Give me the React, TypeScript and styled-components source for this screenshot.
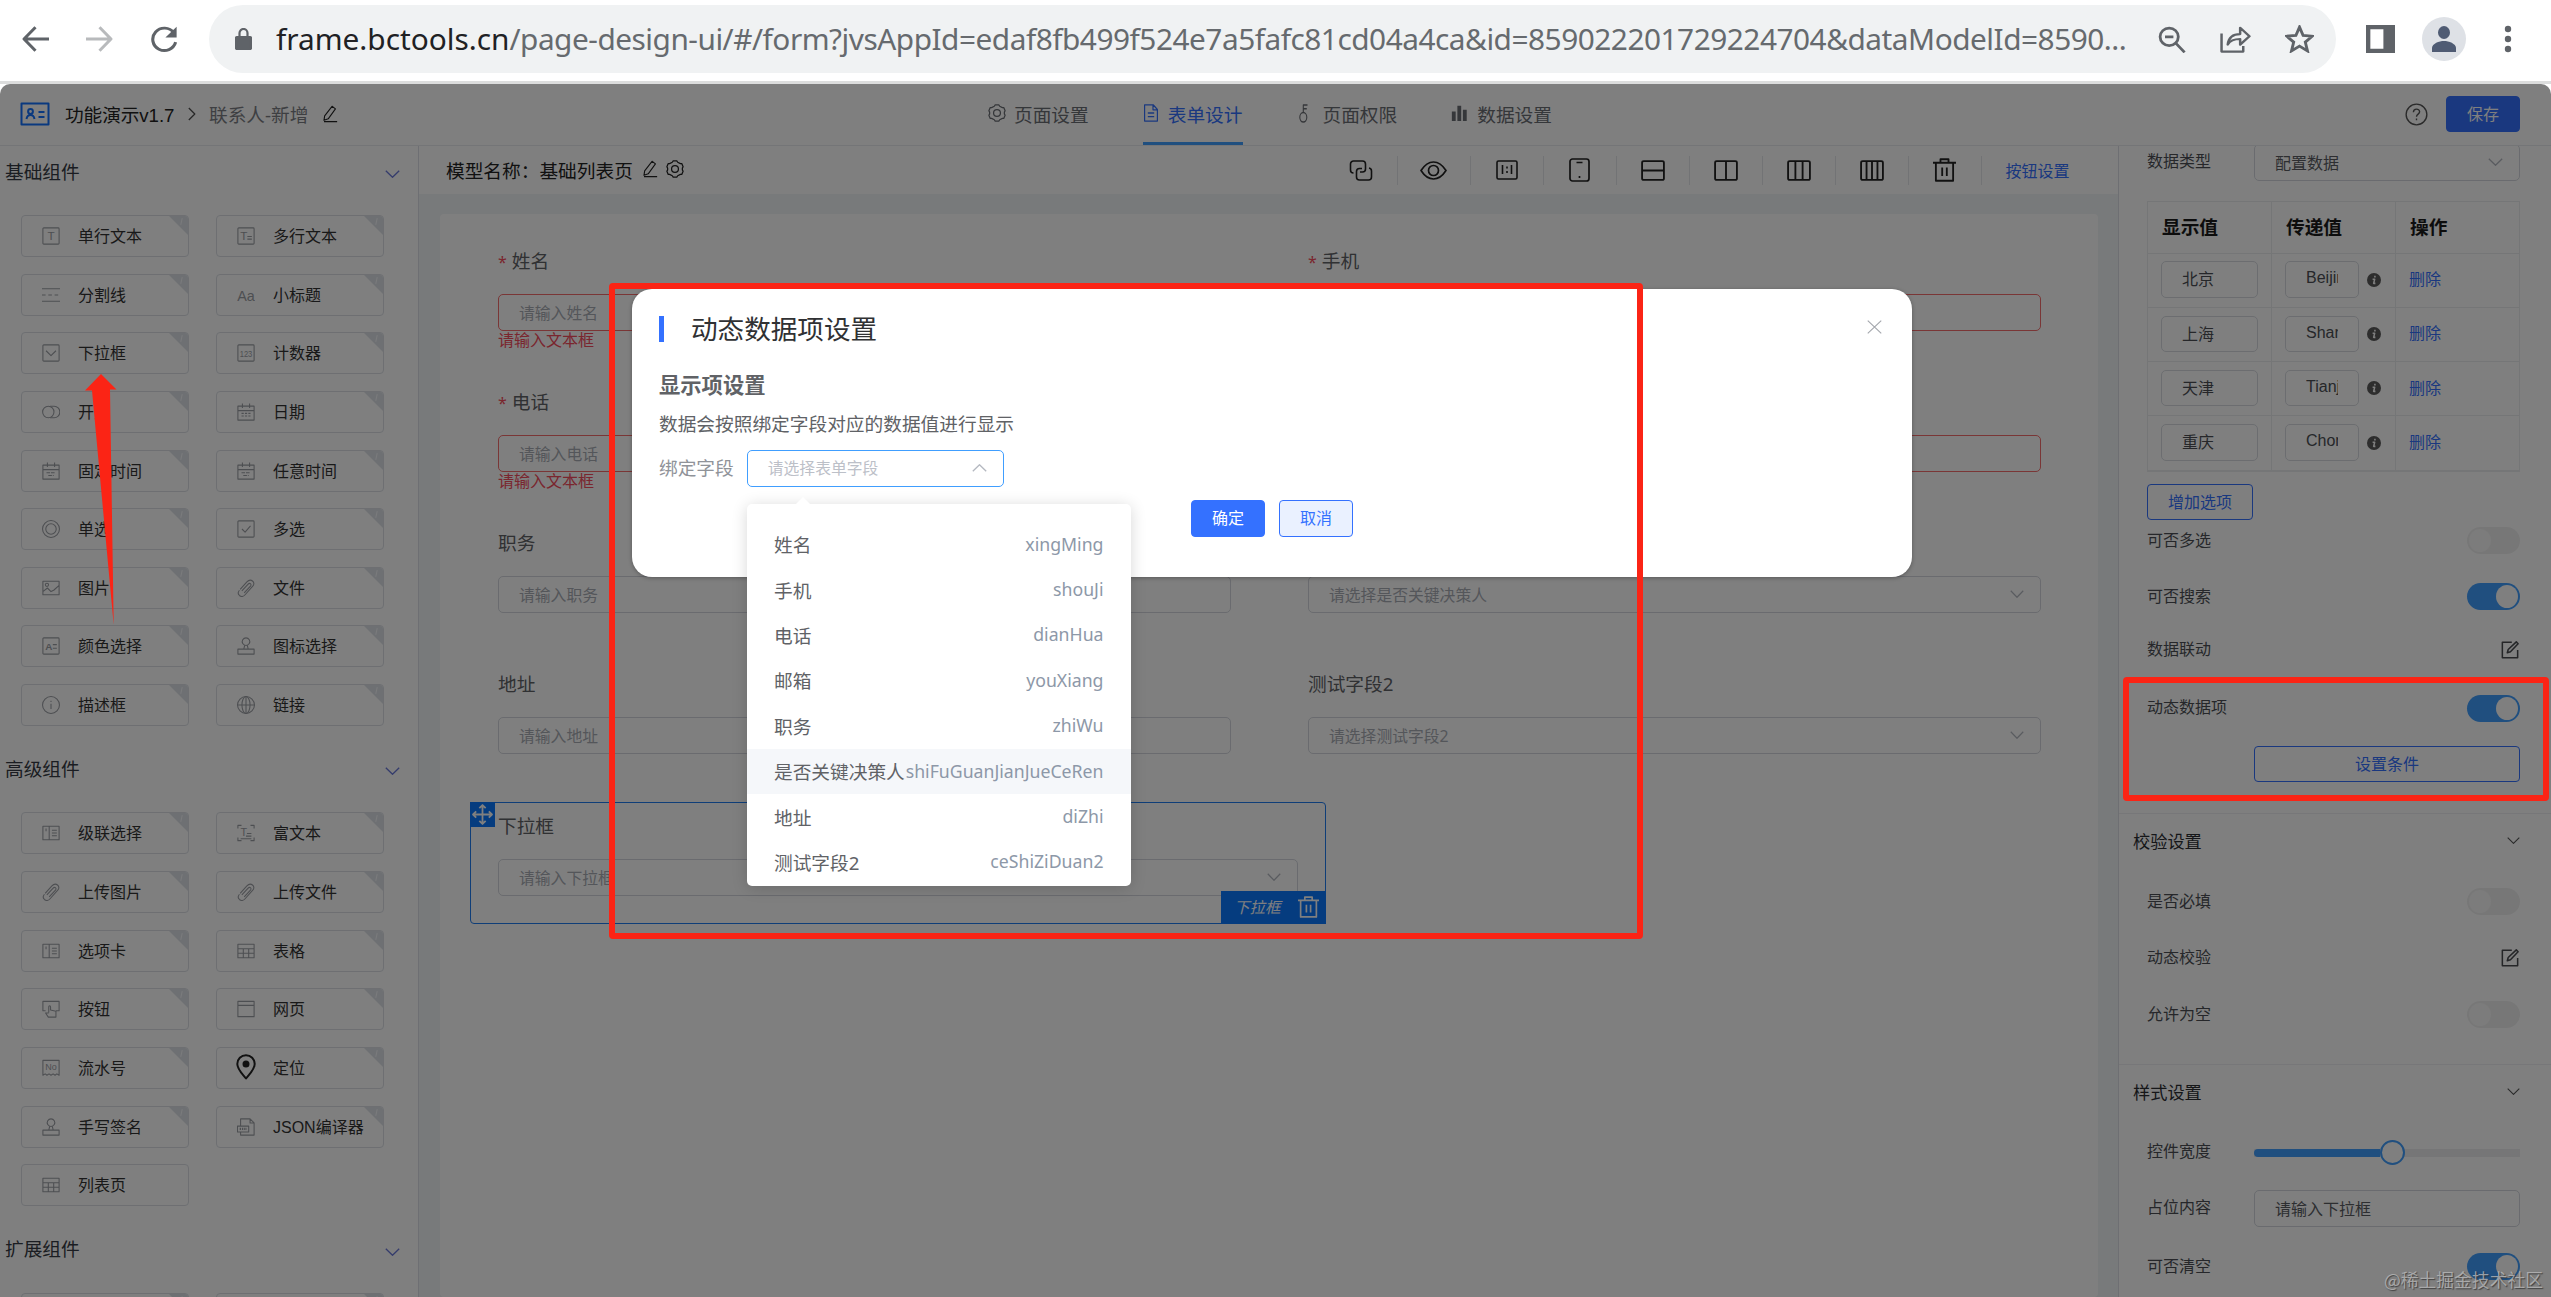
import { ReactNode } from "react";
import styled, { createGlobalStyle, css } from "styled-components";

const cjk = `"Noto Sans CJK SC", sans-serif`;
const ui = `"Noto Sans", ${cjk}`;
const arial = `"Liberation Sans", ${cjk}`;

const GlobalStyle = createGlobalStyle`
    * { box-sizing: border-box; }
    html, body, #root { margin: 0; height: 100%; overflow: hidden; }
    body { background: #fff; font-family: ${ui}; font-size: 18.7px; color: #333; }
    svg { display: block; flex-shrink: 0; }
`;

const Page = styled.div`
    height: 100vh;
    display: flex;
    flex-direction: column;
    position: relative;
`;

// ── Icons ──────────────────────────────────────────────────────────────────────────────
const Svg: React.FC<{ w?: number; h?: number; box?: string; sw?: number; fill?: string; color?: string; children: ReactNode }> = ({
    w = 20, h = w, box = "0 0 20 20", sw = 1.1, fill = "none", color = "currentColor", children,
}) => (
    <svg width={w} height={h} viewBox={box} fill={fill} stroke={color} strokeWidth={sw} strokeLinejoin="round" preserveAspectRatio="none">
        {children}
    </svg>
);

const glyph = { stroke: "none", fill: "currentColor", fontFamily: "Liberation Sans", textAnchor: "middle" as const };
const square = <rect x="1" y="1" width="18" height="18" rx="1" />;
const calendar = <path d="M1 3.5h18V19H1zM1 8.5h18M6 .5v5M14 .5v5" />;
const clip = <path d="M3.500 11.500l7.500-8.200c2-2.200 4.800-2.200 6.500-.8 1.700 1.400 1.500 3.900 0 5.500l-8.500 9.500c-1.700 1.900-4.500 2.200-6.300.8-1.700-1.500-1.500-4 0-5.800M8 15.500l7-7.700c.8-1 .7-2-.1-2.600-.8-.6-1.700-.5-2.500.4l-7 7.700" />;
const panel = <path d="M1 2.500h18v15H1zM8 2.500v15M4.500 5v3M11 7h5.500M11 10h5.500M11 13h5.500" />;
const grid = <path d="M1 2.500h18v15H1zM1 7.500h18M1 12.500h18M7 7.500v10M13 7.500v10" />;
const stamp = <path d="M1 13.500h18v5.500H1zM7.500 13.500l1-4M12.500 13.500l-1-4M10 1a4.200 4.200 0 1 0 .01 0z" />;

const icons: Record<string, ReactNode> = {
    text: <>{square}<text x="10" y="14.500" fontSize="13" {...glyph}>T</text></>,
    textarea: <>{square}<text x="7.500" y="14.500" fontSize="13" {...glyph}>T</text><path d="M11.500 10.500h5M11.500 13.500h5" /></>,
    divider: <><path d="M0 3h20M0 17h20" /><path d="M0 10h20" strokeDasharray="4 3" /></>,
    title: <text x="10" y="17" fontSize="16" {...glyph}>Aa</text>,
    select: <>{square}<path d="M4.500 7.500l5.500 5.500 5.500-5.500" /></>,
    counter: <>{square}<text x="10" y="14" fontSize="10" textLength="14" lengthAdjust="spacingAndGlyphs" {...glyph}>123</text></>,
    toggle: <><circle cx="7" cy="10" r="6.300" /><path d="M9 3.700h4.500a6.300 6.300 0 0 1 0 12.600H9" /></>,
    date: <>{calendar}<path d="M5 11.500h10M5 14.500h10" strokeDasharray="2.500 1.300" /></>,
    time: <>{calendar}<path d="M5 12h10M7 15h6" strokeDasharray="4 1" /></>,
    radio: <><circle cx="10" cy="10" r="9.400" /><circle cx="10" cy="10" r="5.800" /></>,
    check: <>{square}<path d="M5.500 10l3.500 3.500 6-7" /></>,
    image: <><path d="M1 2.500h18v15H1zM1 14l5-4 4 4 3-1.500 6-5.500" /><circle cx="5.500" cy="6.500" r="1.800" /></>,
    clip,
    color: <>{square}<text x="7.500" y="14" fontSize="11" fontWeight="bold" {...glyph}>A</text><path d="M12 8.500h4.500M12 12.500h4.500" /></>,
    stamp,
    info: <><circle cx="10" cy="10" r="9.400" /><path d="M10 8.500v6M10 5.300v1.500" /></>,
    globe: <><circle cx="10" cy="10" r="9.400" /><ellipse cx="10" cy="10" rx="4.500" ry="9.400" /><path d="M.6 10h18.800M10 .6v18.800" /></>,
    panel,
    rich: <><path d="M1 5V1.500h4M15 1.500h4V5M19 15v3.500h-4M5 18.500H1V15M11 10.500h5M10 13.500h6M4 16.300h12" /><text x="7.500" y="13.500" fontSize="12" {...glyph}>T</text></>,
    grid,
    press: <path d="M4 12H1V1.500h18V12h-3.500M7.500 14V7.500c0-1.500 2-1.500 2 0V11l6 1.500v6.500H7L4 14.500h3.500" />,
    web: <path d="M1 1.500h18v17H1zM1 6h18" />,
    number: <><path d="M1 1.500h18v16.500l-2.500-1.500-2 1.500-2.200-1.500-2.300 1.500-2.200-1.500-2.300 1.500-2-1.500L1 18z" /><text x="10" y="12.500" fontSize="10" {...glyph}>No</text></>,
    json: <><path d="M4 9V1h10.500l4.500 4.500V19H4v-3M14.500 1v4.500H19M.5 9H13v6.500H.5z" /><path d="M3 12.200h8" strokeDasharray="1.500 1" strokeWidth="2.500" /></>,
};

const Chevron: React.FC<{ w?: number; h?: number; color?: string; up?: boolean }> = ({ w = 15, h = 8, color = "#b4b8c0", up }) => (
    <Svg w={w} h={h} box="0 0 15 8" color={color} sw={1.3}>
        <path d={up ? "M.8 7.300L7.500.8l6.700 6.500" : "M.8.8l6.700 6.500L14.200.8"} />
    </Svg>
);

const Pencil = () => (
    <Svg w={17} h={18} sw={1.3}><path d="M3.500 17l.8-5L13 1.500l4 2.800-8.500 11zM3.500 18.500H19" /></Svg>
);
const Gear = () => (
    <Svg w={18} h={18} sw={1.4}>
        <path d="M7 2.500L8 1h4l1 1.500 3 1.500h1.500l1.500 3.500-.8 1.500v2l.8 1.500-1.500 3.500H16l-3 1.500-1 1.500H8l-1-1.500-3-1.500H2.500L1 12.500l.8-1.500V9L1 7.500 2.500 4H4z" />
        <circle cx="10" cy="10" r="3.800" />
    </Svg>
);
const Trash: React.FC<{ w: number; h: number; sw?: number }> = ({ w, h, sw = 1.6 }) => (
    <Svg w={w} h={h} sw={sw}><path d="M0 4h20M6.500 4V1h7v3M2.500 4v15h15V4M8 8v7M12 8v7" /></Svg>
);
const Edit = styled((p: { className?: string }) => (
    <span {...p}>
        <Svg w={18} h={18} sw={1.7} color="#4a4c50"><path d="M12 1.500H1.500v17h17V10M7 13l1-3.500L17 1l2 2-8.500 9z" /></Svg>
    </span>
))`
    margin-right: 1px;
`;

// ── Browser bar ────────────────────────────────────────────────────────────────────────
const BrowserBar = styled.div`
    height: 84px;
    flex-shrink: 0;
    display: flex;
    align-items: center;
    padding: 0 39px 3px 22px;
    background: #fff;
    border-bottom: 3px solid #dcdddd;
    color: #5f6368;
`;
const NavIcons = styled.div`
    display: flex;
    gap: 37px;
    width: 187px;
`;
const Address = styled.div`
    width: 2127px;
    height: 68px;
    flex-shrink: 0;
    border-radius: 34px;
    background: #f0f2f3;
    display: flex;
    align-items: center;
    padding: 0 0 0 26px;
`;
const Url = styled.div`
    margin-left: 24px;
    width: 1882px;
    font-size: 29.800px;
    line-height: 40px;
    letter-spacing: -0.480px;
    white-space: nowrap;
    color: #666a6e;
    b { font-weight: 400; color: #202124; letter-spacing: 0; }
`;
const AddressIcons = styled.div`
    display: flex;
    align-items: center;
    gap: 34px;
`;
const BarTail = styled.div`
    flex: 1;
    display: flex;
    align-items: center;
    justify-content: space-between;
    padding-left: 30px;
`;
const Avatar = styled.div`
    width: 44px;
    height: 44px;
    border-radius: 50%;
    background: #dee1e6;
    display: flex;
    align-items: center;
    justify-content: center;
    margin-right: 11px;
`;

// ── App header ─────────────────────────────────────────────────────────────────────────
const AppFrame = styled.div`
    flex: 1;
    min-height: 0;
    display: flex;
    flex-direction: column;
    position: relative;
    isolation: isolate;
    border-radius: 10px 10px 0 0;
    overflow: hidden;
`;
const Header = styled.header`
    height: 62px;
    flex-shrink: 0;
    display: grid;
    grid-template-columns: 988px 1fr auto;
    align-items: center;
    padding-right: 31px;
    border-bottom: 1px solid #e8eaee;
`;
const Crumbs = styled.div`
    display: flex;
    align-items: center;
    padding-left: 20px;
    padding-bottom: 2px;
    white-space: nowrap;
    color: #222;
`;
const CrumbName = styled.span`
    width: 110px;
    margin: 0 13px 0 15px;
    font-family: ${arial};
    letter-spacing: -0.1px;
`;
const CrumbPage = styled.span`
    color: #7c7f85;
    margin: 0 13px 0 13px;
`;
const Tabs = styled.nav`
    display: flex;
    align-self: stretch;
    gap: 54px;
`;
const Tab = styled.div<{ $active?: boolean; $gap?: number }>`
    display: flex;
    align-items: center;
    gap: ${(p) => p.$gap ?? 9}px;
    height: 61px;
    color: ${(p) => (p.$active ? "#3471ff" : "#6b6e74")};
    border-bottom: 3px solid ${(p) => (p.$active ? "#409eff" : "transparent")};
`;
const HeaderRight = styled.div`
    display: flex;
    align-items: center;
    gap: 18px;
    padding-bottom: 1px;
`;
const Button = styled.button<{ $kind?: "primary" | "plain" | "outline"; $w: number }>`
    width: ${(p) => p.$w}px;
    height: 36.500px;
    padding: 0 0 2px;
    border-radius: 4px;
    font-family: ${cjk};
    font-size: 16px;
    border: 1.500px solid #3471ff;
    ${(p) =>
        p.$kind === "primary"
            ? css`background: #3471ff; color: #fff;`
            : p.$kind === "plain"
              ? css`background: #eaf1ff; color: #3471ff;`
              : css`background: transparent; color: #3471ff;`}
`;

const Columns = styled.div`
    flex: 1;
    min-height: 0;
    display: grid;
    grid-template-columns: 419px 1700px 1fr;
`;

// ── Component palette ──────────────────────────────────────────────────────────────────
const Palette = styled.aside`
    border-right: 1px solid #dcdfe6;
    overflow: hidden;
`;
const PaletteHead = styled.div`
    height: 51px;
    display: flex;
    align-items: center;
    justify-content: space-between;
    padding: 0 18px 3px 5px;
    font-family: ${cjk};
    color: #363b44;
    svg { margin-top: 8px; }
`;
const PaletteGrid = styled.div`
    display: grid;
    grid-template-columns: 168px 168px;
    grid-auto-rows: 42px;
    gap: 16.650px 27px;
    padding: 18px 0 17.300px 21px;
`;
const Card = styled.div<{ $tag: boolean }>`
    position: relative;
    display: flex;
    align-items: center;
    gap: 18px;
    padding-left: 20px;
    padding-bottom: 2px;
    border: 1px solid #dcdfe5;
    border-radius: 4px;
    overflow: hidden;
    font-family: ${arial};
    font-size: 16px;
    white-space: nowrap;
    svg { color: #9b9ea4; margin-top: 2px; }
    ${(p) =>
        p.$tag &&
        css`
            &::before {
                content: "";
                position: absolute;
                z-index: 1;
                top: 2px;
                right: 6px;
                width: 1px;
                height: 7px;
                background: #f5f7fa;
                transform: rotate(12deg);
            }
            &::after {
                content: "";
                position: absolute;
                top: -1px;
                right: -1px;
                border-top: 21px solid #dde1e7;
                border-left: 21px solid transparent;
            }
        `}
`;

const basic: [string, string][] = [
    ["text", "单行文本"], ["textarea", "多行文本"],
    ["divider", "分割线"], ["title", "小标题"],
    ["select", "下拉框"], ["counter", "计数器"],
    ["toggle", "开关"], ["date", "日期"],
    ["time", "固定时间"], ["time", "任意时间"],
    ["radio", "单选"], ["check", "多选"],
    ["image", "图片"], ["clip", "文件"],
    ["color", "颜色选择"], ["stamp", "图标选择"],
    ["info", "描述框"], ["globe", "链接"],
];
const advanced: [string, string][] = [
    ["panel", "级联选择"], ["rich", "富文本"],
    ["clip", "上传图片"], ["clip", "上传文件"],
    ["panel", "选项卡"], ["grid", "表格"],
    ["press", "按钮"], ["web", "网页"],
    ["number", "流水号"], ["pin", "定位"],
    ["stamp", "手写签名"], ["json", "JSON编译器"],
    ["grid", "列表页"],
];
const extended: [string, string][] = [["grid", ""], ["web", ""]];

const PinWrap = styled.span`
    margin: 0 -1px;
    && svg { color: #222; margin-top: 0; }
`;

function PaletteSection({ title, items }: { title: string; items: [string, string][] }) {
    return (
        <section>
            <PaletteHead>{title}<Chevron color="#6a78d8" /></PaletteHead>
            <PaletteGrid>
                {items.map(([icon, label], i) => (
                    <Card key={i} $tag={label !== "列表页"}>
                        {icon === "pin" ? (
                            <PinWrap>
                                <Svg w={20} h={26} box="0 0 20 26" sw={2}>
                                    <path d="M10 1.200a8.700 8.700 0 0 0-8.700 8.800c0 5.500 5.700 10.500 8.700 14.500 3-4 8.700-9 8.700-14.500A8.700 8.700 0 0 0 10 1.200z" />
                                    <circle cx="10" cy="10" r="2.500" fill="currentColor" />
                                </Svg>
                            </PinWrap>
                        ) : (
                            <Svg w={18} sw={1.2}>{icons[icon]}</Svg>
                        )}
                        {label}
                    </Card>
                ))}
            </PaletteGrid>
        </section>
    );
}

// ── Form canvas ────────────────────────────────────────────────────────────────────────
const Center = styled.main`
    display: flex;
    flex-direction: column;
    background: #f1f4f7;
    border-right: 1px solid #dcdfe6;
    min-width: 0;
`;
const ModelBar = styled.div`
    height: 48px;
    flex-shrink: 0;
    display: flex;
    align-items: center;
    padding-left: 27px;
    background: #fff;
    color: #222;
    white-space: nowrap;
`;
const ModelName = styled.div`
    display: flex;
    align-items: center;
    gap: 8px;
    width: 878.500px;
    padding-bottom: 2px;
`;
const Tool = styled.div`
    width: 73px;
    height: 29px;
    display: flex;
    align-items: center;
    justify-content: center;
    border-right: 1px solid #e4e6ea;
    color: #222;
`;
const ToolLink = styled.span`
    margin-left: 24px;
    padding-bottom: 1px;
    font-size: 16px;
    color: #3471ff;
`;
const Sheet = styled.div`
    flex: 1;
    margin: 20px 20px 0 21px;
    padding: 24px 30px;
    background: #fff;
    border-radius: 4px;
`;
const FormRow = styled.div`
    display: grid;
    grid-template-columns: 733px 733px;
    gap: 77px;
    height: 141px;
    padding-left: 28px;
`;
const Label = styled.div`
    height: 56.300px;
    padding: 9px 0 0;
    line-height: 28px;
    color: #606266;
    white-space: pre;
    i { font-style: normal; font-size: 16px; color: #f54c5c; margin-right: 5px; }
`;
const Control = styled.div<{ $error?: boolean }>`
    height: 36.500px;
    display: flex;
    align-items: center;
    justify-content: space-between;
    padding: 0 16px 1px 20px;
    border: 1px solid ${(p) => (p.$error ? "#f56c6c" : "#d4d7de")};
    border-radius: 5px;
    font-size: 15.800px;
    color: #a8acb4;
    white-space: nowrap;
`;
const ErrorText = styled.div`
    font-size: 16px;
    line-height: 18px;
    color: #f54c5c;
`;

function Field({ label, hint, error, select }: { label: string; hint: string; error?: boolean; select?: boolean }) {
    return (
        <div>
            <Label>{error && <i>*</i>}{label}</Label>
            <Control $error={error}>{hint}{select && <Chevron w={14} h={8} />}</Control>
            {error && <ErrorText>请输入文本框</ErrorText>}
        </div>
    );
}

const Selected = styled.div`
    position: relative;
    width: 856px;
    height: 122px;
    padding: 0 27px;
    border: 1.500px solid #1f7cf0;
    border-radius: 4px;
`;
const Handle = styled.div`
    position: absolute;
    left: -1px;
    top: -1px;
    width: 25px;
    height: 25px;
    background: #0a78ff;
    color: #fff;
    display: flex;
    align-items: center;
    justify-content: center;
`;
const SelectedTag = styled.div`
    position: absolute;
    right: -1px;
    bottom: -1px;
    width: 105px;
    height: 33px;
    display: flex;
    align-items: center;
    justify-content: space-between;
    padding: 0 7px 2px 13px;
    background: #0a78ff;
    color: #fff;
    font-size: 15.500px;
    font-style: italic;
`;

// ── Property panel ─────────────────────────────────────────────────────────────────────
const Props = styled.aside`
    overflow: hidden;
    padding-left: 28px;
    padding-right: 31px;
    font-family: ${arial};
    font-size: 16px;
    color: #4c4f55;
`;
const PropRow = styled.div<{ $mt: number }>`
    height: 36.500px;
    margin-top: ${(p) => p.$mt}px;
    display: flex;
    align-items: center;
    justify-content: space-between;
`;
const PropLabel = styled.span`
    padding-bottom: 4px;
`;
const PropInput = styled(Control)`
    width: 266px;
    font-size: 16px;
    color: #5a5d63;
`;
const Table = styled.div`
    display: grid;
    grid-template-columns: 124px 124px 1fr;
    grid-template-rows: 52px repeat(4, 54.300px);
    margin: 20px 0 12px;
    border: 1px solid #eaecef;
    border-right: none;
`;
const Th = styled.div`
    padding: 0 0 3px 14px;
    display: flex;
    align-items: center;
    font-weight: 700;
    font-size: 18.700px;
    color: #1a1a1a;
    border-right: 1px solid #eaecef;
    border-bottom: 1px solid #eaecef;
`;
const Td = styled.div`
    display: flex;
    align-items: center;
    gap: 8px;
    padding: 0 0 1px 13px;
    border-right: 1px solid #eaecef;
    border-bottom: 1px solid #eaecef;
`;
const CellInput = styled.div<{ $w: number; $up?: boolean }>`
    width: ${(p) => p.$w}px;
    height: 36.500px;
    padding: 0 20px;
    border: 1px solid #d8dbe1;
    border-radius: 5px;
    line-height: ${(p) => (p.$up ? 32 : 36)}px;
    > span { display: block; overflow: hidden; }
`;
const Remove = styled.span`
    color: #3471ff;
    padding-bottom: 3px;
`;
const Switch = styled.div<{ $on?: boolean }>`
    width: 53px;
    height: 27px;
    padding: 2px;
    border-radius: 14px;
    display: flex;
    justify-content: ${(p) => (p.$on ? "flex-end" : "flex-start")};
    background: ${(p) => (p.$on ? "#409eff" : "#efefef")};
    &::after {
        content: "";
        width: 22px;
        height: 23px;
        border-radius: 50%;
        background: ${(p) => (p.$on ? "#fff" : "#f8f8f8")};
    }
`;
const GroupHead = styled.div<{ $mt: number }>`
    height: 54px;
    margin: ${(p) => p.$mt}px -31px 0 -28px;
    padding: 0 31px 1px 14px;
    display: flex;
    align-items: center;
    justify-content: space-between;
    border-top: 1px solid #eeeff2;
    font-size: 17.200px;
    color: #2c2e33;
`;
const ConditionRow = styled.div`
    display: flex;
    justify-content: flex-end;
    margin-top: 19px;
`;
const Slider = styled.div`
    width: 266px;
    display: flex;
    align-items: center;
    height: 25px;
    margin-top: 2px;
    background: linear-gradient(#ececee, #ececee) center / 100% 8px no-repeat;
    border-radius: 4px;
`;
const SliderFill = styled.div`
    width: 126px;
    height: 8px;
    border-radius: 4px 0 0 4px;
    background: #409eff;
`;
const SliderKnob = styled.div`
    width: 25px;
    height: 25px;
    border-radius: 50%;
    border: 2px solid #409eff;
    background: #fff;
`;

const options = [["北京", "Beijing"], ["上海", "Shanghai"], ["天津", "Tianjin"], ["重庆", "Chongqing"]];

function Prop({ label, mt, children }: { label: string; mt: number; children: ReactNode }) {
    return <PropRow $mt={mt}><PropLabel>{label}</PropLabel>{children}</PropRow>;
}

function PropPanel() {
    return (
        <Props>
            <Prop label="数据类型" mt={-2}><PropInput>配置数据<Chevron /></PropInput></Prop>
            <Table>
                <Th>显示值</Th><Th>传递值</Th><Th>操作</Th>
                {options.map(([name, value]) => [
                    <Td key={name}><CellInput $w={97}><span>{name}</span></CellInput></Td>,
                    <Td key={value}>
                        <CellInput $w={74} $up><span>{value}</span></CellInput>
                        <Svg w={14} fill="#5a5a5a" color="none">
                            <circle cx="10" cy="10" r="10" />
                            <path d="M8 8.800h3l-1.500 6h2.500M11.300 4v2.600" stroke="#fff" strokeWidth="2.200" fill="none" />
                        </Svg>
                    </Td>,
                    <Td key={name + "x"}><Remove>删除</Remove></Td>,
                ])}
            </Table>
            <Button $w={106}>增加选项</Button>
            <Prop label="可否多选" mt={2.5}><Switch /></Prop>
            <Prop label="可否搜索" mt={19.5}><Switch $on /></Prop>
            <Prop label="数据联动" mt={16.5}><Edit /></Prop>
            <Prop label="动态数据项" mt={22}><Switch $on /></Prop>
            <ConditionRow><Button $w={266}>设置条件</Button></ConditionRow>
            <GroupHead $mt={31}>校验设置<Chevron w={13} h={7} color="#555" /></GroupHead>
            <Prop label="是否必填" mt={16.5}><Switch /></Prop>
            <Prop label="动态校验" mt={19.5}><Edit /></Prop>
            <Prop label="允许为空" mt={20.5}><Switch /></Prop>
            <GroupHead $mt={31}>样式设置<Chevron w={13} h={7} color="#555" /></GroupHead>
            <Prop label="控件宽度" mt={15.5}>
                <Slider><SliderFill /><SliderKnob /></Slider>
            </Prop>
            <Prop label="占位内容" mt={20}><PropInput>请输入下拉框</PropInput></Prop>
            <Prop label="可否清空" mt={22}><Switch $on /></Prop>
        </Props>
    );
}

// ── Dialog ─────────────────────────────────────────────────────────────────────────────
const Mask = styled.div`
    position: absolute;
    inset: 0;
    background: rgba(0, 0, 0, 0.5);
    z-index: 2;
`;
const Dialog = styled.div`
    position: absolute;
    left: 632px;
    top: 289px;
    width: 1280px;
    height: 288px;
    padding: 0 27px;
    display: flex;
    flex-direction: column;
    background: #fff;
    border-radius: 20px;
    box-shadow: 0 1px 4px rgba(0, 0, 0, 0.3);
    color: #606266;
`;
const DialogHead = styled.div`
    display: flex;
    align-items: center;
    height: 80px;
    font-size: 26.600px;
    color: #303133;
    padding-right: 3px;
    svg { margin: -4px 0 0 auto; }
    &::before {
        content: "";
        width: 5px;
        height: 26px;
        margin-right: 27px;
        background: #3471ff;
    }
    > span { padding-bottom: 3px; }
`;
const DialogTitle = styled.div`
    font-size: 21.300px;
    font-weight: 700;
    line-height: 32px;
`;
const DialogText = styled.div`
    line-height: 30px;
    margin: 8px 0 11px;
`;
const BindRow = styled.div`
    display: flex;
    align-items: center;
    gap: 13px;
    color: #909399;
    > span { padding-bottom: 5px; }
`;
const BindSelect = styled(Control)`
    width: 257px;
    height: 37px;
    padding-bottom: 2px;
    border-color: #409eff;
    color: #bcc0c8;
`;
const DialogFoot = styled.div`
    display: flex;
    justify-content: center;
    gap: 14px;
    margin-top: 13px;
`;
const Dropdown = styled.div`
    position: absolute;
    left: 747px;
    top: 504px;
    width: 383.500px;
    height: 382px;
    padding-top: 18px;
    background: #fff;
    border-radius: 5px;
    box-shadow: 0 2px 16px rgba(0, 0, 0, 0.16);
    &::before {
        content: "";
        position: absolute;
        left: 48px;
        top: -7px;
        border: 8px solid transparent;
        border-top: none;
        border-bottom: 8px solid #fff;
    }
`;
const Option = styled.div<{ $hover?: boolean }>`
    height: 45.400px;
    display: flex;
    align-items: center;
    justify-content: space-between;
    padding: 0 27px 2px 27px;
    white-space: nowrap;
    color: #606266;
    background: ${(p) => (p.$hover ? "#f5f7fa" : "transparent")};
    span { color: #8d98a8; font-size: 17.700px; }
`;

const fields = [
    ["姓名", "xingMing"], ["手机", "shouJi"], ["电话", "dianHua"], ["邮箱", "youXiang"], ["职务", "zhiWu"],
    ["是否关键决策人", "shiFuGuanJianJueCeRen"], ["地址", "diZhi"], ["测试字段2", "ceShiZiDuan2"],
];

// ── Red annotations and watermark, laid over everything ────────────────────────────────
const RedFrame = styled.div<{ $x: number; $y: number; $w: number; $h: number }>`
    position: absolute;
    left: ${(p) => p.$x}px;
    top: ${(p) => p.$y}px;
    width: ${(p) => p.$w}px;
    height: ${(p) => p.$h}px;
    border: 6px solid #fb2415;
    border-radius: 4px;
`;
const RedArrow = styled.svg`
    position: absolute;
    left: 84px;
    top: 373px;
`;
const Watermark = styled.div`
    position: absolute;
    right: 8px;
    bottom: 3px;
    font-family: ${cjk};
    font-size: 17.800px;
    line-height: 30px;
    color: rgba(190, 190, 190, 0.75);
    text-shadow: 1px 1px 1px rgba(40, 40, 40, 0.7);
    white-space: nowrap;
`;

const box = <rect x="1" y="1" width="20" height="18" rx="1.500" />;
const tools: ReactNode[] = [
    <Svg w={24} h={21} box="0 0 24 21" sw={1.6}><path d="M4.500 13a3 3 0 0 1-3-3V4a3 3 0 0 1 3-3h9a3 3 0 0 1 3 3v5a3 3 0 0 1-3 3H11M20 8a3 3 0 0 1 2.500 3v6a3 3 0 0 1-3 3h-9a3 3 0 0 1-3-3v-5.500a3 3 0 0 1 3-3H13" /></Svg>,
    <Svg w={27} h={19} box="0 0 27 19" sw={1.7}><path d="M1 9.500Q6.500 1 13.500 1T26 9.500Q20.500 18 13.500 18T1 9.500z" /><circle cx="13.500" cy="9.500" r="5" /></Svg>,
    <Svg w={22} h={20} box="0 0 22 20" sw={1.6}>{box}<path d="M6.500 5v9M15.500 5v9M11 6.500v2M11 11v2" /></Svg>,
    <Svg w={21} h={24} box="0 0 21 24" sw={1.7}><rect x="1" y="1" width="19" height="22" rx="2.500" /><path d="M7.500 4.500h6M10.500 18v2" /></Svg>,
    <Svg w={24} h={21} box="0 0 22 20" sw={1.7}>{box}<path d="M1 10h20" /></Svg>,
    <Svg w={24} h={21} box="0 0 22 20" sw={1.7}>{box}<path d="M11 1v18" /></Svg>,
    <Svg w={24} h={21} box="0 0 22 20" sw={1.7}>{box}<path d="M7.700 1v18M14.300 1v18" /></Svg>,
    <Svg w={24} h={21} box="0 0 22 20" sw={1.7}>{box}<path d="M6 1v18M11 1v18M16 1v18" /></Svg>,
    <Trash w={23} h={24} />,
];

export default function App() {
    return (
        <Page>
            <GlobalStyle />
            <BrowserBar>
                <NavIcons>
                    <Svg w={27} h={26} sw={2.2}><path d="M20 10H1.500M10 1L1.500 10l8.500 9" /></Svg>
                    <Svg w={27} h={26} sw={2.2} color="#b8babc"><path d="M0 10h18.500M10 1l8.500 9-8.500 9" /></Svg>
                    <Svg w={28} h={27} sw={2.2}>
                        <path d="M17 5A8.300 8.300 0 1 0 18.300 12" />
                        <path d="M19 .5v8h-8z" fill="currentColor" stroke="none" />
                    </Svg>
                </NavIcons>
                <Address>
                    <Svg w={17} h={22} box="0 0 17 22" sw={2.2}>
                        <path d="M4.500 8V5a4 4 0 0 1 8 0v3" />
                        <rect x="1" y="9" width="15" height="12" rx="1" fill="currentColor" />
                    </Svg>
                    <Url><b>frame.bctools.cn</b>/page-design-ui/#/form?jvsAppId=edaf8fb499f524e7a5fafc81cd04a4ca&amp;id=859022201729224704&amp;dataModelId=8590...</Url>
                    <AddressIcons>
                        <Svg w={28} h={27} sw={2}><circle cx="8" cy="8" r="6.500" /><path d="M12.500 12.500l6.500 7M5 8h6" /></Svg>
                        <Svg w={31} h={28} sw={1.6}><path d="M1 6v13h14v-4M5 14c.5-5 3-7.500 8-7.500V2l6 6-6 6V10c-4 0-6.500 1-8 4z" /></Svg>
                        <Svg w={29} h={28} sw={2}><path d="M10 1.500l2.500 6 6.300.5-4.800 4.200 1.500 6.300-5.500-3.400-5.500 3.400L6 12.200 1.200 8l6.300-.5z" strokeLinejoin="miter" /></Svg>
                    </AddressIcons>
                </Address>
                <BarTail>
                    <Svg w={29} h={28} sw={0}><path fillRule="evenodd" fill="currentColor" d="M0 0h20v20H0zM3 3v14h9V3z" /></Svg>
                    <Avatar>
                        <Svg w={24} h={26} sw={0} fill="#4f5b73"><ellipse cx="10" cy="5" rx="5" ry="5" /><path d="M0 20v-3c0-3.500 6-5.500 10-5.500s10 2 10 5.500v3z" /></Svg>
                    </Avatar>
                    <Svg w={8} h={28} box="0 0 8 28" sw={0} fill="#5f6368"><circle cx="4" cy="4" r="3.200" /><circle cx="4" cy="14" r="3.200" /><circle cx="4" cy="24" r="3.200" /></Svg>
                </BarTail>
            </BrowserBar>

            <AppFrame>
                <Header>
                    <Crumbs>
                        <Svg w={30} h={24} box="0 0 30 24" color="#1472ff" sw={2}>
                            <rect x="1.500" y="1.500" width="27" height="21" />
                            <circle cx="10.500" cy="9.500" r="2.400" />
                            <path d="M6.500 17c.5-3 2-4 4-4s3.500 1 4 4M18.500 10h6M18.500 15h6" />
                        </Svg>
                        <CrumbName>功能演示v1.7</CrumbName>
                        <Svg w={8} h={14} box="0 0 8 14" sw={1.3} color="#555"><path d="M.8 1l6 6-6 6" /></Svg>
                        <CrumbPage>联系人-新增</CrumbPage>
                        <Pencil />
                    </Crumbs>
                    <Tabs>
                        <Tab $gap={8}><Gear />页面设置</Tab>
                        <Tab $active>
                            <Svg w={16} h={18} sw={1.5}><path d="M2 1h11l5 5v13H2zM12.500 1v5.500H18M6 10h8M6 14h8" /></Svg>
                            表单设计
                        </Tab>
                        <Tab $gap={12}>
                            <Svg w={14} h={19} sw={1.6}><circle cx="9" cy="14" r="5" /><path d="M9 9V1h6M9 5h5" /></Svg>
                            页面权限
                        </Tab>
                        <Tab>
                            <Svg w={17} h={16} sw={0} fill="currentColor"><path d="M1 8h4.500v12H1zM7.500 1H12v19H7.500zM14 6h4.500v14H14z" /></Svg>
                            数据设置
                        </Tab>
                    </Tabs>
                    <HeaderRight>
                        <Svg w={23} h={23} sw={1.2} color="#555"><circle cx="10" cy="10" r="9" /><path d="M7.300 8c0-3.500 5.400-3.500 5.400-.3 0 2-2.700 2-2.700 4.300M10 13.500v1.500" /></Svg>
                        <Button $kind="primary" $w={74}>保存</Button>
                    </HeaderRight>
                </Header>

                <Columns>
                    <Palette>
                        <PaletteSection title="基础组件" items={basic} />
                        <PaletteSection title="高级组件" items={advanced} />
                        <PaletteSection title="扩展组件" items={extended} />
                    </Palette>

                    <Center>
                        <ModelBar>
                            <ModelName><span>模型名称：基础列表页</span><Pencil /><Gear /></ModelName>
                            {tools.map((t, i) => <Tool key={i}>{t}</Tool>)}
                            <ToolLink>按钮设置</ToolLink>
                        </ModelBar>
                        <Sheet>
                            <FormRow>
                                <Field label="姓名" hint="请输入姓名" error />
                                <Field label="手机" hint="请输入手机" error />
                            </FormRow>
                            <FormRow>
                                <Field label="电话" hint="请输入电话" error />
                                <Field label="邮箱" hint="请输入邮箱" error />
                            </FormRow>
                            <FormRow>
                                <Field label="职务" hint="请输入职务" />
                                <Field label="是否关键决策人" hint="请选择是否关键决策人" select />
                            </FormRow>
                            <FormRow>
                                <Field label="地址" hint="请输入地址" />
                                <Field label="测试字段2" hint="请选择测试字段2" select />
                            </FormRow>
                            <Selected>
                                <Field label="下拉框" hint="请输入下拉框" select />
                                <Handle>
                                    <Svg w={21} h={21} sw={1.7}><path d="M10 1v18M1 10h18M7 4l3-3 3 3M7 16l3 3 3-3M4 7l-3 3 3 3M16 7l3 3-3 3" /></Svg>
                                </Handle>
                                <SelectedTag>下拉框<Trash w={21} h={22} /></SelectedTag>
                            </Selected>
                        </Sheet>
                    </Center>

                    <PropPanel />
                </Columns>
                <Mask />
            </AppFrame>

            <Dialog>
                <DialogHead>
                    <span>动态数据项设置</span>
                    <Svg w={15} h={14} sw={1.5} color="#a4a7ad"><path d="M1 1l18 18M19 1L1 19" /></Svg>
                </DialogHead>
                <DialogTitle>显示项设置</DialogTitle>
                <DialogText>数据会按照绑定字段对应的数据值进行显示</DialogText>
                <BindRow>
                    <span>绑定字段</span>
                    <BindSelect>请选择表单字段<Chevron up /></BindSelect>
                </BindRow>
                <DialogFoot>
                    <Button $kind="primary" $w={74}>确定</Button>
                    <Button $kind="plain" $w={74}>取消</Button>
                </DialogFoot>
            </Dialog>

            <Dropdown>
                {fields.map(([name, key]) => (
                    <Option key={key} $hover={name === "是否关键决策人"}>{name}<span>{key}</span></Option>
                ))}
            </Dropdown>

            <RedFrame $x={609} $y={282.5} $w={1034} $h={656} />
            <RedFrame $x={2123} $y={677} $w={426} $h={124} />
            <RedArrow width="34" height="254" viewBox="0 0 34 254" fill="#fb2415">
                <path d="M17 1L32.500 16.500H26L29.700 252 8 17.500H1z" />
            </RedArrow>
            <Watermark>@稀土掘金技术社区</Watermark>
        </Page>
    );
}
